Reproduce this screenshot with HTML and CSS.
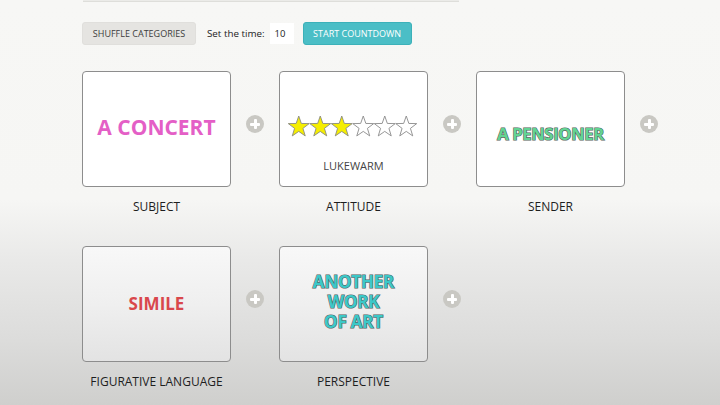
FILE: index.html
```html
<!DOCTYPE html>
<html>
<head>
<meta charset="utf-8">
<link rel="stylesheet" href="styles.css">
</head>
<body>
<div class="page">
  <div class="topstrip"></div>
  <div class="controls">
    <button class="btn btn-shuffle">SHUFFLE CATEGORIES</button>
    <span class="time-label">Set the time:</span>
    <span class="time-input">10</span>
    <button class="btn btn-start">START COUNTDOWN</button>
  </div>

  <div class="row row-one">
    <div class="item">
      <div class="col">
        <div class="card"><span class="word word-concert">A CONCERT</span></div>
        <div class="label">SUBJECT</div>
      </div>
      <div class="plus-slot"><span class="plus"></span></div>
    </div>
    <div class="item">
      <div class="col">
        <div class="card card-attitude">
          <svg class="stars" width="130" height="23" viewBox="0 0 130 23">
            <defs>
              <polygon id="star" points="0,-11 2.59,-3.56 10.46,-3.4 4.18,1.36 6.47,8.9 0,4.4 -6.47,8.9 -4.18,1.36 -10.46,-3.4 -2.59,-3.56"/>
            </defs>
            <use href="#star" x="10.75" y="12" class="on"/>
            <use href="#star" x="32.25" y="12" class="on"/>
            <use href="#star" x="53.75" y="12" class="on"/>
            <use href="#star" x="75.25" y="12" class="off"/>
            <use href="#star" x="96.75" y="12" class="off"/>
            <use href="#star" x="118.25" y="12" class="off"/>
          </svg>
          <span class="mood">LUKEWARM</span>
        </div>
        <div class="label">ATTITUDE</div>
      </div>
      <div class="plus-slot"><span class="plus"></span></div>
    </div>
    <div class="item">
      <div class="col">
        <div class="card card-low"><span class="word word-pensioner">A PENSIONER</span></div>
        <div class="label">SENDER</div>
      </div>
      <div class="plus-slot"><span class="plus"></span></div>
    </div>
  </div>

  <div class="row row-two">
    <div class="item">
      <div class="col">
        <div class="card"><span class="word word-simile">SIMILE</span></div>
        <div class="label">FIGURATIVE LANGUAGE</div>
      </div>
      <div class="plus-slot"><span class="plus"></span></div>
    </div>
    <div class="item">
      <div class="col">
        <div class="card"><span class="word word-art">ANOTHER<br>WORK<br>OF ART</span></div>
        <div class="label">PERSPECTIVE</div>
      </div>
      <div class="plus-slot"><span class="plus"></span></div>
    </div>
  </div>
</div>
</body>
</html>
```

FILE: styles.css
```css
html, body {
  margin: 0;
  padding: 0;
  height: 100%;
}
body {
  font-family: "Open Sans", "Liberation Sans", sans-serif;
  background: linear-gradient(to bottom, #f7f7f5 0px, #f6f6f4 200px, #e9e9e8 260px, #dcdcdb 340px, #cfcfcd 405px);
  color: #222;
  overflow: hidden;
}
.page {
  width: 720px;
  height: 405px;
  padding-left: 82px;
  box-sizing: border-box;
}
.topstrip {
  width: 376px;
  height: 1px;
  margin-left: 1px;
  background: #ebebe8;
  border-bottom: 1px solid #dededa;
}
.controls {
  display: flex;
  align-items: center;
  margin-top: 20px;
  height: 23px;
}
.btn {
  font-family: "Open Sans", "Liberation Sans", sans-serif;
  font-size: 9px;
  height: 23px;
  border-radius: 3px;
  padding: 0;
  box-sizing: border-box;
  white-space: nowrap;
  cursor: pointer;
}
.btn-shuffle {
  width: 114px;
  background: #e5e4e1;
  border: 1px solid #e0dfdc;
  color: #3c3c3c;
}
.time-label {
  font-size: 9.8px;
  color: #222;
  margin-left: 11px;
}
.time-input {
  width: 24px;
  height: 21px;
  background: #fff;
  margin-left: 5px;
  font-size: 9.5px;
  line-height: 21px;
  padding-left: 5px;
  box-sizing: border-box;
  color: #222;
}
.btn-start {
  width: 109px;
  margin-left: 9px;
  background: #4bbec6;
  border: 1px solid #3cb1b9;
  color: #fff;
}
.row {
  display: flex;
}
.row-one {
  margin-top: 26px;
}
.row-two {
  margin-top: 31px;
}
.item {
  display: flex;
}
.col {
  display: flex;
  flex-direction: column;
  align-items: center;
  width: 149px;
}
.card {
  width: 149px;
  height: 116px;
  box-sizing: border-box;
  border: 1px solid #8d8d8d;
  border-radius: 4px;
  background: #fff;
  display: flex;
  align-items: center;
  justify-content: center;
  text-align: center;
}
.row-two .card {
  background: linear-gradient(to bottom, #f8f8f8 0%, #efefef 50%, #e3e3e3 100%);
}
.label {
  margin-top: 12px;
  font-size: 12px;
  line-height: 16px;
  color: #1e1e1e;
  white-space: nowrap;
}
.plus-slot {
  width: 48px;
  height: 116px;
  display: flex;
  align-items: center;
  justify-content: center;
}
.plus {
  position: relative;
  width: 18px;
  height: 18px;
  border-radius: 50%;
  background: #c9c8c3;
  margin-top: -10px;
}
.plus::before,
.plus::after {
  content: "";
  position: absolute;
  background: #fff;
  border-radius: 1px;
}
.plus::before {
  left: 4px;
  top: 7.5px;
  width: 10px;
  height: 3px;
}
.plus::after {
  left: 7.5px;
  top: 4px;
  width: 3px;
  height: 10px;
}
.word {
  font-weight: 700;
  white-space: nowrap;
}
.word-concert {
  font-size: 21px;
  color: #e45fc6;
  margin-top: -4px;
}
.word-pensioner {
  font-size: 16.5px;
  color: #62d493;
  margin-top: 8px;
  letter-spacing: -0.3px;
  -webkit-text-stroke: 1.2px #55605a;
  paint-order: stroke fill;
}
.word-simile {
  font-size: 17px;
  color: #d9474c;
  margin-top: -2px;
}
.word-art {
  font-size: 17px;
  line-height: 20px;
  color: #3cc8c8;
  letter-spacing: -0.2px;
  margin-top: -4px;
  -webkit-text-stroke: 1.2px #55605f;
  paint-order: stroke fill;
}
.card-attitude {
  flex-direction: column;
  justify-content: flex-start;
  padding-top: 43px;
}
.stars {
  display: block;
  margin-left: -2px;
}
.stars .on {
  fill: #f5ee00;
  stroke: #8a8a80;
  stroke-width: 0.9;
}
.stars .off {
  fill: #fff;
  stroke: #8a8a8a;
  stroke-width: 0.9;
}
.mood {
  margin-top: 21px;
  font-size: 11px;
  line-height: 14px;
  color: #444;
}
```
